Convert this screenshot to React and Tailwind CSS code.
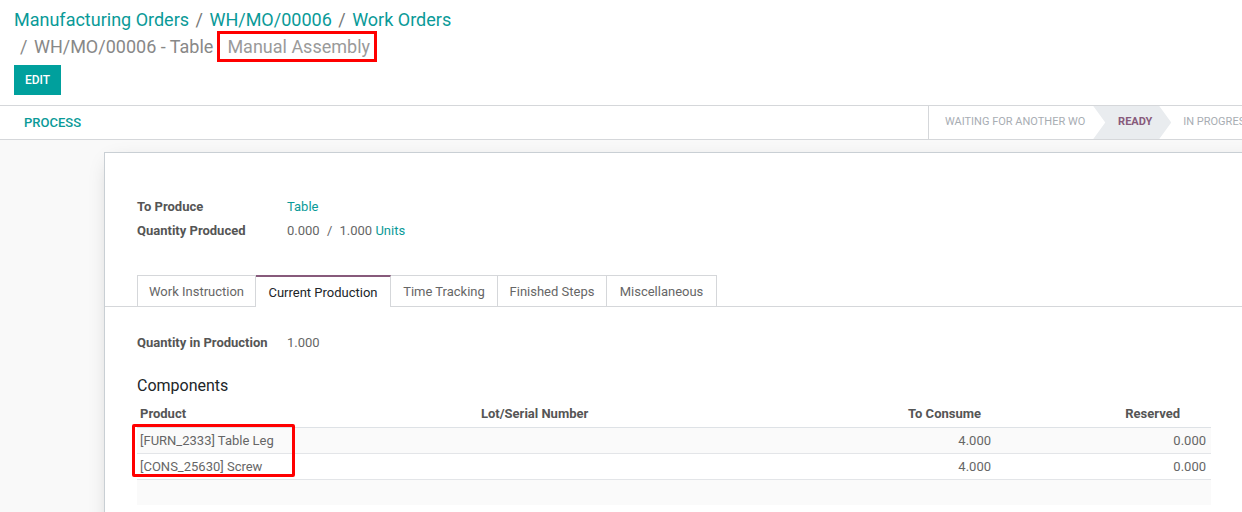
const TABS = [
  { label: "Work Instruction", w: "w-[119px]" },
  { label: "Current Production", w: "w-[135px]" },
  { label: "Time Tracking", w: "w-[107px]" },
  { label: "Finished Steps", w: "w-[109px]" },
  { label: "Miscellaneous", w: "w-[110px]" },
];

const ROWS = [
  { product: "[FURN_2333] Table Leg", consume: "4.000", reserved: "0.000" },
  { product: "[CONS_25630] Screw", consume: "4.000", reserved: "0.000" },
];

export default function App() {
  return (
    <div className="w-[1242px] h-[512px] overflow-hidden bg-white font-['Roboto',sans-serif] text-[#4c4c4c] flex flex-col">
      {/* Control panel */}
      <div className="px-[14px] pt-[6px] pb-[10px] border-b border-[#d5d7da]">
        <div className="text-[18px] leading-[28px] text-[#0a9a98]">
          Manufacturing Orders <span className="text-[#777] mx-[2px]">/</span> WH/MO/00006{" "}
          <span className="text-[#777] mx-[2px]">/</span> Work Orders
        </div>
        <div className="-mt-px text-[18px] leading-[28px] text-[#888] pl-[6px] flex">
          <span>
            / <span className="ml-[2px]">WH/MO/00006 - Table</span>
          </span>
          <span className="relative ml-[14px] text-[#9a9a9a]">
            Manual Assembly
            <span className="absolute -left-[10px] -right-[7px] -top-[2px] -bottom-[1px] border-[3px] border-[#f00]" />
          </span>
        </div>
        <button className="mt-[4px] h-[30px] w-[47px] bg-[#00a09d] text-white text-[12px] font-medium">
          EDIT
        </button>
      </div>

      {/* Status bar */}
      <div className="h-[34px] flex items-stretch border-b border-[#d5d7da]">
        <div className="pl-[24px] flex items-center text-[13px] font-medium text-[#0a9a98]">PROCESS</div>
        <div className="ml-auto flex items-stretch border-l border-[#d5d7da] w-[314px] shrink-0 overflow-hidden text-[11px] uppercase whitespace-nowrap">
          <div className="shrink-0 pl-[16px] pr-[8px] flex items-center text-[#a8adb3]">Waiting for another WO</div>
          <div className="w-[78px] shrink-0 bg-[#e9ecef] flex items-center justify-center pl-[6px] font-bold text-[#875a7b] [clip-path:polygon(0_0,calc(100%-12px)_0,100%_50%,calc(100%-12px)_100%,0_100%,12px_50%)]">
            Ready
          </div>
          <div className="shrink-0 pl-[12px] flex items-center text-[#a8adb3]">In Progress</div>
        </div>
      </div>

      {/* Sheet area */}
      <div className="flex-1 bg-[#f9f9f9] pt-[12px] pl-[104px] overflow-hidden">
        <div className="w-[1180px] h-[420px] bg-white border border-[#c9cfd4] shadow-[0_5px_20px_-8px_rgba(0,0,0,0.25)] pt-[42px] pl-[32px]">
          <div className="text-[13px] leading-[24px]">
            <div className="flex">
              <div className="w-[150px] font-bold text-[#555]">To Produce</div>
              <div className="text-[#0a9a98]">Table</div>
            </div>
            <div className="flex">
              <div className="w-[150px] font-bold text-[#555]">Quantity Produced</div>
              <div className="text-[#666]">
                0.000 <span className="mx-[4px]">/</span> 1.000 <span className="text-[#0a9a98]">Units</span>
              </div>
            </div>
          </div>

          {/* Tabs */}
          <div className="mt-[32px] -ml-[32px] pl-[32px] flex border-b border-[#d5d7da] h-[32px]">
            {TABS.map((t) => {
              const active = t.label === "Current Production";
              return (
                <div
                  key={t.label}
                  className={
                    t.w +
                    (active
                      ? " pt-px flex items-center justify-center text-[13px] text-[#212529] bg-white border-r border-[#d5d7da] border-t-2 border-t-[#875a7b] -mb-px h-[32px]"
                      : " pt-px flex items-center justify-center text-[13px] text-[#666] border-t border-r border-[#d5d7da] first:border-l")
                  }
                >
                  {t.label}
                </div>
              );
            })}
          </div>

          <div className="mt-[24px] flex text-[13px] leading-[24px]">
            <div className="w-[150px] font-bold text-[#555]">Quantity in Production</div>
            <div className="text-[#666]">1.000</div>
          </div>

          <div className="mt-[19px] text-[16px] leading-[24px] text-[#212529]">Components</div>

          {/* Table */}
          <div className="relative mt-[3px] w-[1074px] text-[13px]">
            <div className="flex h-[27px] items-center font-bold text-[#555] border-b border-[#dee2e6]">
              <div className="w-[341px] pl-[3px]">Product</div>
              <div className="w-[330px] pl-[3px]">Lot/Serial Number</div>
              <div className="w-[177px] text-right pr-[4px]">To Consume</div>
              <div className="flex-1 text-right pr-[31px]">Reserved</div>
            </div>
            {ROWS.map((r, i) => (
              <div
                key={r.product}
                className={
                  "flex h-[26px] items-center text-[#666] border-b border-[#e3e5e8] " +
                  (i === 0 ? "bg-[#fafafa]" : "bg-white")
                }
              >
                <div className="w-[341px] pl-[3px]">{r.product}</div>
                <div className="w-[330px]" />
                <div className="w-[183px] text-right">{r.consume}</div>
                <div className="flex-1 text-right pr-[5px]">{r.reserved}</div>
              </div>
            ))}
            <div className="h-[25px] bg-[#fafafa]" />
            <div className="absolute left-[-5px] top-[23px] w-[163px] h-[53px] border-[3px] border-[#f00] rounded-[2px]" />
          </div>
        </div>
      </div>
    </div>
  );
}
